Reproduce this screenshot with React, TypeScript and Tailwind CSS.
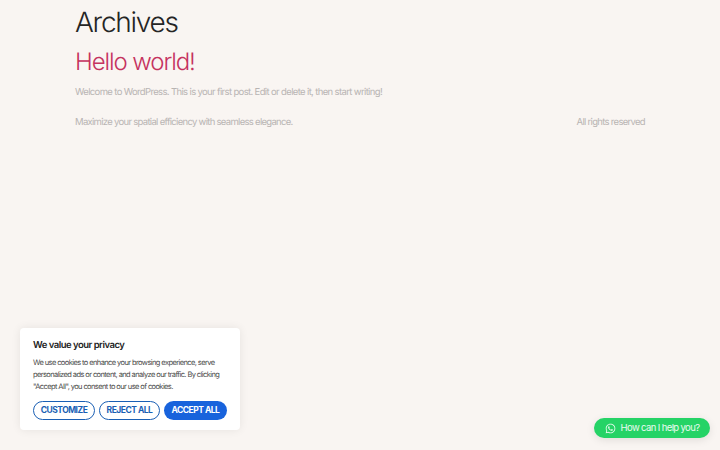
import { FaWhatsapp } from 'react-icons/fa';

export default function App() {
  return (
    <div className="h-[450px] overflow-hidden bg-[#f9f5f2] font-['Inter',sans-serif] [text-rendering:geometricPrecision] relative">
      {/* Main content */}
      <main className="w-[570px] ml-[75px]">
        <h1 className="text-[28px] leading-[36px] pt-1 text-[#252525] font-light tracking-[-1.26px]">Archives</h1>
        <h2 className="mt-[4px] text-[24px] leading-[36px] text-[#c5325f] font-light tracking-[-1.1px]">Hello world!</h2>
        <p className="mt-[4px] text-[9.5px] leading-[17px] text-[#b8b4b2] tracking-[-0.64px]">
          Welcome to WordPress. This is your first post. Edit or delete it, then start writing!
        </p>
        <footer className="mt-[13px] flex justify-between text-[9.5px] leading-[17px] text-[#b8b4b2] tracking-[-0.7px]">
          <span>Maximize your spatial efficiency with seamless elegance.</span>
          <span>All rights reserved</span>
        </footer>
      </main>

      {/* Cookie banner */}
      <div className="absolute left-5 bottom-5 w-[220px] h-[102px] bg-white rounded shadow-[0_0_10px_rgba(0,0,0,0.08)] px-[13px] pt-[11px]">
        <h3 className="text-[9.5px] leading-[13px] font-semibold text-[#212121] tracking-[-0.5px]">We value your privacy</h3>
        <p className="mt-[5px] text-[7.5px] leading-[12px] text-[#4a4a4a] tracking-[-0.6px]">
          We use cookies to enhance your browsing experience, serve personalized ads or content, and analyze our traffic. By clicking "Accept All", you consent to our use of cookies.
        </p>
        <div className="mt-[8px] flex gap-1">
          <button className="h-[19px] w-[62px] rounded-full border border-[#1a5fb4] text-[8.5px] font-bold text-[#1a5fb4] tracking-[-0.5px]">CUSTOMIZE</button>
          <button className="h-[19px] w-[61px] rounded-full border border-[#1a5fb4] text-[8.5px] font-bold text-[#1a5fb4] tracking-[-0.5px]">REJECT ALL</button>
          <button className="h-[19px] w-[63px] rounded-full bg-[#1863dc] text-[8.5px] font-bold text-white tracking-[-0.5px]">ACCEPT ALL</button>
        </div>
      </div>

      {/* Chat button */}
      <button className="absolute right-[10px] bottom-[12px] h-5 w-[116px] rounded-full bg-[#25d366] shadow-[0_2px_8px_rgba(0,0,0,0.1)] flex items-center justify-center gap-[5px] text-[9.5px] tracking-[-0.62px] text-white/90">
        <FaWhatsapp className="w-[11px] h-[11px]" />
        How can I help you?
      </button>
    </div>
  );
}
